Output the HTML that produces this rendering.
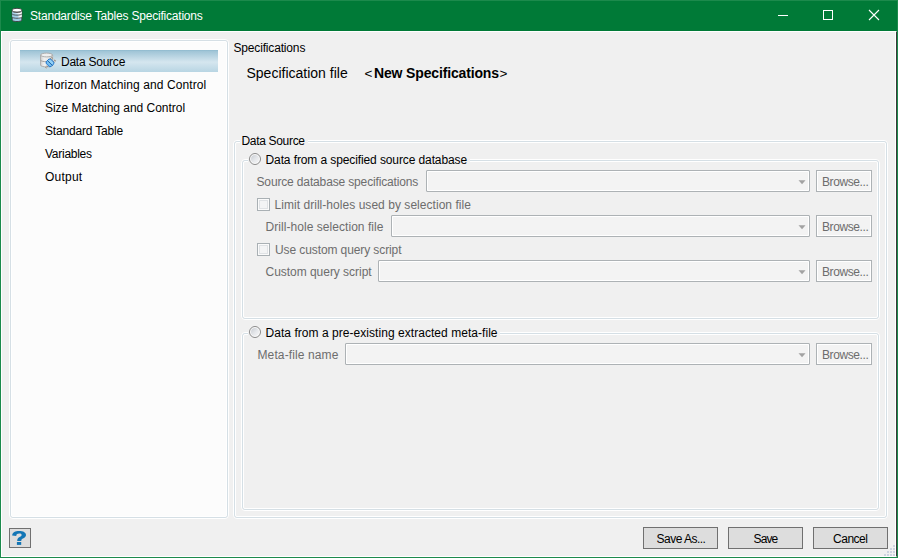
<!DOCTYPE html>
<html><head><meta charset="utf-8"><style>
*{margin:0;padding:0;box-sizing:border-box}
html,body{width:898px;height:558px;overflow:hidden;background:#f0f0f0;font-family:"Liberation Sans",sans-serif}
.t{position:absolute;white-space:nowrap}
.abs{position:absolute}
.gb{position:absolute;border:1px solid #fff;border-radius:4px}
.gb>.b1{position:absolute;left:0;top:0;right:0;bottom:0;border:1px solid #d5dfe5;border-radius:3px}
.gb>.b1>.b2{position:absolute;left:0;top:0;right:0;bottom:0;border:1px solid #fff;border-radius:2px}
.hdr{position:absolute;background:#f0f0f0}
.combo{position:absolute;border:1px solid #adb2b5;border-radius:1px;background:#f3f3f3}
.bb{position:absolute;border:1px solid #adb2b5;background:#f3f3f3}
.bb>i{position:absolute;left:0;top:0;right:0;bottom:0;border:1px solid #fff}
.combo>i{position:absolute;left:0;top:0;right:0;bottom:0;border:1px solid #fff;border-radius:1px}
.arrow{position:absolute;width:0;height:0;border-left:3.5px solid transparent;border-right:3.5px solid transparent;border-top:4px solid #a0a0a0}
.btn{position:absolute;border:1px solid #707070;background:#dddddd}
.cb{position:absolute;width:13px;height:13px;border:1px solid #a9b0b4;background:#fbfbfb}
.cb>i{position:absolute;left:1px;top:1px;width:9px;height:9px;border:1px solid #dfe2e5;background:#f3f4f5}
.rb{position:absolute;width:12px;height:12px;border-radius:50%;border:1px solid #8a8a8a;background:#fbfbfb}
.rb>i{position:absolute;left:1px;top:1px;width:8px;height:8px;border-radius:50%;background:linear-gradient(135deg,#c9cdd3 0,#e6e8eb 55%,#f6f6f7 100%)}
</style></head><body>
<div class="abs" style="left:0;top:0;width:898px;height:558px;background:#1c8a4c"></div>
<div class="abs" style="left:1px;top:1px;width:896px;height:556px;background:#007a37"></div>
<div class="abs" style="left:1px;top:31px;width:896px;height:526px;background:#f0f0f0;border-top:1px solid #fff;border-left:1px solid #fff;border-bottom:1px solid #fff;border-right:1px solid #3a3a3a"></div>
<div class="abs" style="left:895px;top:32px;width:1px;height:524px;background:#fff"></div>
<svg class="abs" style="left:11px;top:7px" width="13" height="16" viewBox="0 0 13 16">
<defs>
<linearGradient id="b2" x1="0" y1="1" x2="1" y2="0"><stop offset="0" stop-color="#9fcde6"/><stop offset=".3" stop-color="#a8d2e8"/><stop offset=".55" stop-color="#fff"/><stop offset="1" stop-color="#fff"/></linearGradient>
<linearGradient id="b3" x1="0" x2="1"><stop offset="0" stop-color="#9fcde6"/><stop offset=".55" stop-color="#a6d1e8"/><stop offset=".8" stop-color="#fff"/><stop offset="1" stop-color="#f4f9fc"/></linearGradient>
</defs>
<path d="M1.2 3.2 V12.9 C1.2 15.1 10.8 15.1 10.8 12.9 V3.2 Z" fill="#9fcde6" stroke="#3c3c3c" stroke-width="0.9"/>
<path d="M1.2 3.2 V6.8 C1.2 8.6 10.8 8.6 10.8 6.8 V3.2 Z" fill="url(#b2)"/>
<path d="M1.2 6.8 C1.2 8.6 10.8 8.6 10.8 6.8 V9.9 C10.8 11.7 1.2 11.7 1.2 9.9 Z" fill="url(#b3)"/>
<path d="M1.2 3.2 V4 C1.2 5.8 10.8 5.8 10.8 4 V3.2 Z" fill="#fff"/>
<path d="M1.2 4 C1.2 5.8 10.8 5.8 10.8 4" fill="none" stroke="#4a4a4a" stroke-width="0.9"/>
<path d="M1.2 6.8 C1.2 8.6 10.8 8.6 10.8 6.8" fill="none" stroke="#4a4a4a" stroke-width="0.9"/>
<path d="M1.2 9.9 C1.2 11.7 10.8 11.7 10.8 9.9" fill="none" stroke="#4a4a4a" stroke-width="0.9"/>
<ellipse cx="6" cy="3.2" rx="4.8" ry="1.9" fill="#fff" stroke="#3c3c3c" stroke-width="0.9"/>
</svg>
<div class="t" style="left:30px;top:9.54px;font-size:12.0px;line-height:12.0px;color:#fff;letter-spacing:-0.2px;font-weight:normal;">Standardise Tables Specifications</div>
<div class="abs" style="left:778px;top:15px;width:10px;height:1px;background:#fff"></div>
<div class="abs" style="left:823px;top:10px;width:10px;height:10px;border:1px solid #fff"></div>
<svg class="abs" style="left:868px;top:9px" width="12" height="12" viewBox="0 0 12 12">
<path d="M1 1 L11 11 M11 1 L1 11" stroke="#fff" stroke-width="1.1"/></svg>
<div class="gb" style="left:9px;top:39px;width:220px;height:480px"><div class="b1" style="background:#fcfcfc"><div class="b2"></div></div></div>
<div class="abs" style="left:20px;top:50px;width:198px;height:22px;background:linear-gradient(#8ab7cc 0,#9fc4d6 1px,#d5e6ef 55%,#b8d5e3 100%)"></div>
<svg class="abs" style="left:38px;top:51px" width="20" height="19" viewBox="0 0 20 19">
<defs>
<linearGradient id="gy" x1="0" x2="1"><stop offset="0" stop-color="#d2d2d2"/><stop offset=".3" stop-color="#f0f0f0"/><stop offset=".7" stop-color="#e6e6e6"/><stop offset="1" stop-color="#c6c6c6"/></linearGradient>
<linearGradient id="bl" x1="1" y1="0" x2="0" y2="1"><stop offset="0" stop-color="#aee0fb"/><stop offset=".55" stop-color="#86c9f2"/><stop offset="1" stop-color="#3f9be4"/></linearGradient>
</defs>
<path d="M2.6 4 V14.2 C2.6 16.4 14.6 16.4 14.6 14.2 V4 Z" fill="url(#gy)" stroke="#a6a6a6" stroke-width="0.9"/>
<ellipse cx="8.6" cy="4" rx="6" ry="1.9" fill="#efefef" stroke="#a6a6a6" stroke-width="0.9"/>
<path d="M2.6 9.2 C2.6 11.2 14.6 11.2 14.6 9.2" fill="none" stroke="#9c9c9c" stroke-width="0.9"/>
<path d="M12.6 8.4 L15 6 M15.4 11.2 L17.8 8.8" stroke="#dcd8d2" stroke-width="1.9"/>
<path d="M12.6 8.4 L15 6 M15.4 11.2 L17.8 8.8" stroke="#7f7a74" stroke-width="1.9" stroke-dasharray="0.9 0.9"/>
<path d="M9.4 15.2 L7.2 17.4" stroke="#dcd8d2" stroke-width="1.7"/>
<path d="M9.4 15.2 L7.2 17.4" stroke="#7f7a74" stroke-width="1.7" stroke-dasharray="0.8 0.8"/>
<path d="M8.2 10.8 L10.9 8.1 H12.6 L15.7 11.2 V12.9 L13 15.6 H11.3 L8.2 12.5 Z" fill="url(#bl)" stroke="#1f78d2" stroke-width="1" stroke-linejoin="round"/>
<path d="M9.5 9.6 L14.4 14.5" stroke="#1b5fa6" stroke-width="1"/>
</svg>
<div class="t" style="left:61px;top:55.84px;font-size:12.0px;line-height:12.0px;color:#000;letter-spacing:-0.24px;font-weight:normal;">Data Source</div>
<div class="t" style="left:45px;top:78.84px;font-size:12.0px;line-height:12.0px;color:#000;letter-spacing:0.094px;font-weight:normal;">Horizon Matching and Control</div>
<div class="t" style="left:45px;top:101.84px;font-size:12.0px;line-height:12.0px;color:#000;letter-spacing:-0.027px;font-weight:normal;">Size Matching and Control</div>
<div class="t" style="left:45px;top:124.84px;font-size:12.0px;line-height:12.0px;color:#000;letter-spacing:-0.176px;font-weight:normal;">Standard Table</div>
<div class="t" style="left:45px;top:147.84px;font-size:12.0px;line-height:12.0px;color:#000;letter-spacing:-0.264px;font-weight:normal;">Variables</div>
<div class="t" style="left:45px;top:170.84px;font-size:12.0px;line-height:12.0px;color:#000;letter-spacing:0.22px;font-weight:normal;">Output</div>
<div class="t" style="left:233.5px;top:41.64px;font-size:12.0px;line-height:12.0px;color:#000;letter-spacing:-0.166px;font-weight:normal;">Specifications</div>
<div class="t" style="left:246.5px;top:66.05px;font-size:14px;line-height:14px;color:#000;letter-spacing:0.0px;font-weight:normal;">Specification file</div>
<div class="t" style="left:364.5px;top:66.97px;font-size:13.5px;line-height:13.5px;color:#000;letter-spacing:0px;font-weight:normal;">&lt;</div>
<div class="t" style="left:374px;top:66.05px;font-size:14px;line-height:14px;color:#000;letter-spacing:-0.15px;font-weight:bold;">New Specifications</div>
<div class="t" style="left:499.5px;top:66.97px;font-size:13.5px;line-height:13.5px;color:#000;letter-spacing:0px;font-weight:normal;">&gt;</div>
<div class="gb" style="left:233px;top:140px;width:655px;height:379px"><div class="b1"><div class="b2"></div></div></div>
<div class="hdr" style="left:240px;top:132px;width:68px;height:16px"></div>
<div class="t" style="left:241.5px;top:134.54px;font-size:12.0px;line-height:12.0px;color:#000;letter-spacing:-0.32px;font-weight:normal;">Data Source</div>
<div class="gb" style="left:241px;top:159px;width:639px;height:161px"><div class="b1"><div class="b2"></div></div></div>
<div class="hdr" style="left:248px;top:150px;width:222px;height:16px"></div>
<div class="rb" style="left:249px;top:153px"><i></i></div>
<div class="t" style="left:265.5px;top:154.24px;font-size:12.0px;line-height:12.0px;color:#000;letter-spacing:-0.106px;font-weight:normal;">Data from a specified source database</div>
<div class="t" style="left:256.5px;top:176.44px;font-size:12.0px;line-height:12.0px;color:#6d6d6d;letter-spacing:-0.146px;font-weight:normal;">Source database specifications</div>
<div class="combo" style="left:426px;top:170px;width:384px;height:22px"><i></i></div>
<svg class="abs" style="left:797px;top:179px" width="10" height="7"><path d="M1.5 1.2 H8.5 L5 5.2 Z" fill="#a2a2a2"/></svg>
<div class="bb" style="left:816px;top:170px;width:56px;height:22px"><i></i></div>
<div class="t" style="left:822px;top:175.44px;font-size:12.0px;line-height:12.0px;color:#6d6d6d;letter-spacing:-0.412px;font-weight:normal;margin-top:1px">Browse...</div>
<div class="cb" style="left:257px;top:198px"><i></i></div>
<div class="t" style="left:274.5px;top:198.84px;font-size:12.0px;line-height:12.0px;color:#6d6d6d;letter-spacing:0.043px;font-weight:normal;">Limit drill-holes used by selection file</div>
<div class="t" style="left:265.5px;top:220.84px;font-size:12.0px;line-height:12.0px;color:#6d6d6d;letter-spacing:0.053px;font-weight:normal;">Drill-hole selection file</div>
<div class="combo" style="left:391px;top:215px;width:419px;height:22px"><i></i></div>
<svg class="abs" style="left:797px;top:224px" width="10" height="7"><path d="M1.5 1.2 H8.5 L5 5.2 Z" fill="#a2a2a2"/></svg>
<div class="bb" style="left:816px;top:215px;width:56px;height:22px"><i></i></div>
<div class="t" style="left:822px;top:220.44px;font-size:12.0px;line-height:12.0px;color:#6d6d6d;letter-spacing:-0.412px;font-weight:normal;margin-top:1px">Browse...</div>
<div class="cb" style="left:257px;top:243px"><i></i></div>
<div class="t" style="left:275px;top:243.54px;font-size:12.0px;line-height:12.0px;color:#6d6d6d;letter-spacing:-0.1px;font-weight:normal;">Use custom query script</div>
<div class="t" style="left:265.5px;top:266.14px;font-size:12.0px;line-height:12.0px;color:#6d6d6d;letter-spacing:-0.032px;font-weight:normal;">Custom query script</div>
<div class="combo" style="left:378px;top:260px;width:432px;height:22px"><i></i></div>
<svg class="abs" style="left:797px;top:269px" width="10" height="7"><path d="M1.5 1.2 H8.5 L5 5.2 Z" fill="#a2a2a2"/></svg>
<div class="bb" style="left:816px;top:260px;width:56px;height:22px"><i></i></div>
<div class="t" style="left:822px;top:265.44px;font-size:12.0px;line-height:12.0px;color:#6d6d6d;letter-spacing:-0.412px;font-weight:normal;margin-top:1px">Browse...</div>
<div class="gb" style="left:241px;top:332px;width:639px;height:179px"><div class="b1"><div class="b2"></div></div></div>
<div class="hdr" style="left:248px;top:324px;width:252px;height:16px"></div>
<div class="rb" style="left:249px;top:326px"><i></i></div>
<div class="t" style="left:265.5px;top:326.54px;font-size:12.0px;line-height:12.0px;color:#000;letter-spacing:0.045px;font-weight:normal;">Data from a pre-existing extracted meta-file</div>
<div class="t" style="left:257.5px;top:348.64px;font-size:12.0px;line-height:12.0px;color:#6d6d6d;letter-spacing:0.113px;font-weight:normal;">Meta-file name</div>
<div class="combo" style="left:345px;top:343px;width:465px;height:22px"><i></i></div>
<svg class="abs" style="left:797px;top:352px" width="10" height="7"><path d="M1.5 1.2 H8.5 L5 5.2 Z" fill="#a2a2a2"/></svg>
<div class="bb" style="left:816px;top:343px;width:56px;height:22px"><i></i></div>
<div class="t" style="left:822px;top:348.44px;font-size:12.0px;line-height:12.0px;color:#6d6d6d;letter-spacing:-0.412px;font-weight:normal;margin-top:1px">Browse...</div>
<div class="btn" style="left:9px;top:528px;width:22px;height:20px"></div>
<svg class="abs" style="left:11px;top:530px" width="17" height="16" viewBox="0 0 17 16">
<path d="M1.2 5.6 C1.2 2.4 4.4 1 8 1 C12.2 1 15 2.5 15 5 C15 7.5 12 8.3 10.6 9.4 C10.3 9.7 10.3 10.3 10.3 11 H6.2 C6.2 9.4 6.6 8.2 8.6 7.1 C10.2 6.2 10.6 5.8 10.6 5 C10.6 4.1 9.7 3.6 8.2 3.6 C6.4 3.6 5.4 4.3 5.2 6 Z" fill="#1275b5"/>
<rect x="5.9" y="12" width="4.3" height="2.9" fill="#1275b5"/>
</svg>
<div class="btn" style="left:643px;top:527px;width:75px;height:22px"></div>
<div class="t" style="left:656.5px;top:532.64px;font-size:12.0px;line-height:12.0px;color:#000;letter-spacing:-0.51px;font-weight:normal;">Save As...</div>
<div class="btn" style="left:728px;top:527px;width:75px;height:22px"></div>
<div class="t" style="left:753.5px;top:532.64px;font-size:12.0px;line-height:12.0px;color:#000;letter-spacing:-0.867px;font-weight:normal;">Save</div>
<div class="btn" style="left:813px;top:527px;width:75px;height:22px"></div>
<div class="t" style="left:833px;top:532.64px;font-size:12.0px;line-height:12.0px;color:#000;letter-spacing:-0.48px;font-weight:normal;">Cancel</div>
<div class="abs" style="left:893px;top:545px;width:2px;height:2px;background:#ccd3e0"></div>
<div class="abs" style="left:890px;top:548px;width:2px;height:2px;background:#ccd3e0"></div>
<div class="abs" style="left:893px;top:548px;width:2px;height:2px;background:#ccd3e0"></div>
<div class="abs" style="left:887px;top:551px;width:2px;height:2px;background:#ccd3e0"></div>
<div class="abs" style="left:890px;top:551px;width:2px;height:2px;background:#ccd3e0"></div>
<div class="abs" style="left:893px;top:551px;width:2px;height:2px;background:#ccd3e0"></div>
<div class="abs" style="left:884px;top:554px;width:2px;height:2px;background:#ccd3e0"></div>
<div class="abs" style="left:887px;top:554px;width:2px;height:2px;background:#ccd3e0"></div>
<div class="abs" style="left:890px;top:554px;width:2px;height:2px;background:#ccd3e0"></div>
<div class="abs" style="left:893px;top:554px;width:2px;height:2px;background:#ccd3e0"></div>
</body></html>
